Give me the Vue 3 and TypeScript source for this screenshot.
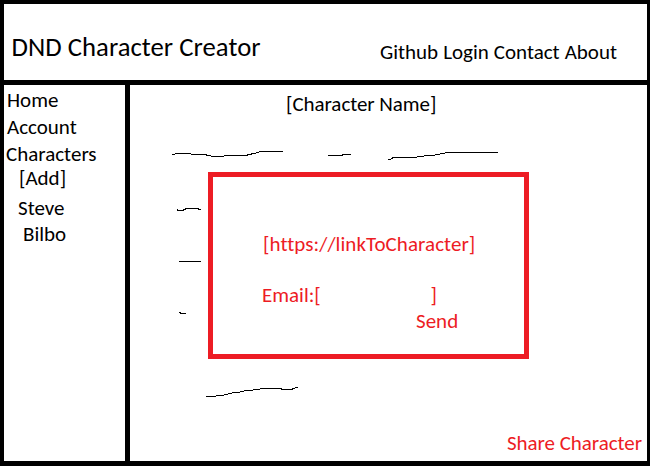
<script setup lang="ts">
interface SideItem {
  label: string
  kind: string
}

const navLinks: string[] = ['Github', 'Login', 'Contact', 'About']

const sideItems: SideItem[] = [
  { label: 'Home', kind: 'home' },
  { label: 'Account', kind: 'account' },
  { label: 'Characters', kind: 'characters' },
  { label: '[Add]', kind: 'add' },
  { label: 'Steve', kind: 'steve' },
  { label: 'Bilbo', kind: 'bilbo' },
]

// Hand-drawn placeholder lines, each a list of [x, y, length] pixel runs.
const scribbles: [number, number, number][][] = [
  [[172, 154, 3], [175, 153, 16], [191, 154, 16], [206, 155, 5], [211, 156, 13], [224, 155, 24], [247, 154, 5], [251, 153, 5], [256, 152, 3], [259, 151, 24]],
  [[328, 155, 15], [342, 154, 9]],
  [[388, 159, 3], [391, 158, 2], [392, 157, 25], [417, 156, 7], [424, 155, 11], [435, 154, 5], [440, 153, 5], [445, 152, 53]],
  [[177, 209, 1], [177, 210, 7], [183, 209, 3], [185, 208, 14], [198, 209, 3]],
  [[179, 261, 22]],
  [[179, 312, 2], [180, 313, 6]],
  [[206, 396, 10], [216, 395, 8], [224, 394, 4], [228, 393, 4], [232, 392, 8], [240, 391, 4], [244, 390, 9], [253, 389, 7], [260, 388, 22], [281, 389, 12], [292, 388, 3], [295, 387, 3]],
]

const paths: string[] = scribbles.map((runs) =>
  runs.map(([x, y, w]) => `M${x} ${y}h${w}v1h-${w}z`).join(''),
)
</script>

<template>
  <div class="frame">
    <header class="header">
      <h1 class="title">DND Character Creator</h1>
      <nav class="nav">
        <a v-for="link in navLinks" :key="link">{{ link }}</a>
      </nav>
    </header>
    <div class="body">
      <aside class="sidebar">
        <a v-for="item in sideItems" :key="item.label" :class="['item', item.kind]">{{ item.label }}</a>
      </aside>
      <main class="main">
        <h2 class="name">[Character Name]</h2>
        <svg class="sheet" viewBox="130 85 517 376" shape-rendering="crispEdges" aria-hidden="true">
          <path v-for="(d, i) in paths" :key="i" :d="d" />
        </svg>
        <section class="modal">
          <div class="link">[https://linkToCharacter]</div>
          <div class="email"><span>Email:[</span><span>]</span></div>
          <a class="send">Send</a>
        </section>
        <a class="share">Share Character</a>
      </main>
    </div>
  </div>
</template>

<style>
body {
  background: #fff;
}
</style>

<style scoped>
.frame {
  box-sizing: border-box;
  width: 650px;
  height: 466px;
  padding: 4px 3px 5px 4px;
  display: flex;
  flex-direction: column;
  gap: 5px;
  background: #000;
  color: #000;
  font-family: Carlito, Calibri, Lato, sans-serif;
  font-size: 21px;
  line-height: 26px;
  font-variant-ligatures: none;
  white-space: nowrap;
}

.header {
  height: 76px;
  display: flex;
  justify-content: space-between;
  align-items: flex-start;
  box-sizing: border-box;
  padding: 27px 30px 0 7.5px;
  background: #fff;
}

.title {
  margin: 0;
  font-size: 26.7px;
  line-height: 32px;
  font-weight: 400;
  letter-spacing: 0.04px;
}

.nav {
  display: flex;
  gap: 5px;
  padding-top: 8px;
}

.body {
  flex: 1;
  display: grid;
  grid-template-columns: 121px 517px;
  gap: 5px;
}

.sidebar {
  display: flex;
  flex-direction: column;
  align-items: flex-start;
  padding-top: 2px;
  background: #fff;
}

.item {
  height: 27px;
}

.home,
.account {
  padding-left: 3px;
}

.characters {
  height: 24px;
  padding-left: 2px;
}

.add {
  height: 30px;
  padding-left: 15px;
}

.steve {
  height: 26px;
  padding-left: 14px;
}

.bilbo {
  padding-left: 19px;
}

.main {
  position: relative;
  display: flex;
  flex-direction: column;
  justify-content: space-between;
  box-sizing: border-box;
  padding: 6px 5px 5px 156px;
  background: #fff;
}

.name {
  margin: 0;
  font-size: 21px;
  font-weight: 400;
  letter-spacing: -0.05px;
}

.sheet {
  position: absolute;
  inset: 0;
  width: 517px;
  height: 376px;
}

.modal {
  position: absolute;
  left: 78px;
  top: 87px;
  box-sizing: border-box;
  width: 321px;
  height: 187px;
  padding: 54px 0 0 49px;
  border: 5px solid #ed1c24;
  background: #fff;
  color: #ed1c24;
}

.link {
  height: 51px;
  padding-left: 1px;
  letter-spacing: 0.06px;
}

.email {
  width: 175px;
  display: flex;
  justify-content: space-between;
}

.send {
  display: block;
  padding-left: 154px;
}

.share {
  align-self: flex-end;
  color: #ed1c24;
  letter-spacing: -0.04px;
}
</style>
